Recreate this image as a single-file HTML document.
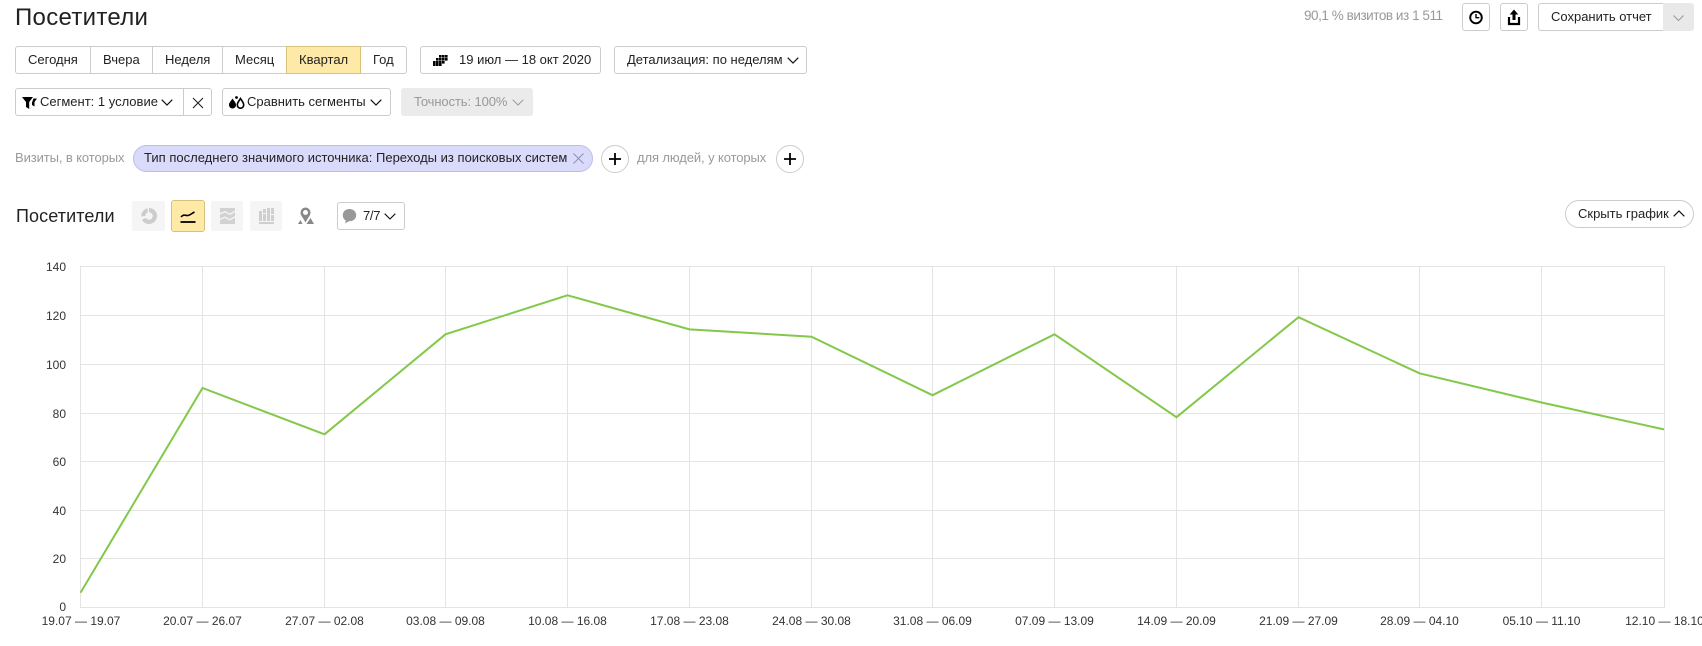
<!DOCTYPE html>
<html lang="ru"><head><meta charset="utf-8"><title>Посетители</title>
<style>
html,body{margin:0;padding:0;background:#fff}
body{position:relative;width:1702px;height:646px;overflow:hidden;font-family:"Liberation Sans",sans-serif;font-size:13px;color:#222}
.a{position:absolute;white-space:nowrap}
.b{position:absolute;box-sizing:border-box;border:1px solid #ccc;border-radius:3px;background:#fff}
.t{position:absolute;white-space:nowrap;line-height:16px;height:16px}
.g{color:#999}
svg{position:absolute;overflow:visible}
</style></head><body>
<div class="t" style="left:15px;top:3px;font-size:24px;line-height:30px;height:30px;color:#222;letter-spacing:.3px">Посетители</div>

<div class="t g" style="left:1304px;top:8px;letter-spacing:-.45px;font-size:13.5px">90,1 % визитов из 1 511</div>
<div class="b" style="left:1462px;top:3px;width:28px;height:28px"></div>
<svg style="left:1462px;top:3px" width="28" height="28" viewBox="0 0 28 28"><circle cx="14" cy="14.500" r="5.800" fill="none" stroke="#000" stroke-width="1.900"/><path d="M14 11v3.700h3.300" fill="none" stroke="#000" stroke-width="1.400"/></svg>
<div class="b" style="left:1500px;top:3px;width:28px;height:28px"></div>
<svg style="left:1500px;top:3px" width="28" height="28" viewBox="0 0 28 28"><path d="M14 6.500l-4.300 5h2.800v5.500h3v-5.500h2.800z" fill="#000"/><path d="M9 14v7h10v-7" fill="none" stroke="#000" stroke-width="2.200"/></svg>
<div class="b" style="left:1538px;top:3px;width:126px;height:28px;border-radius:3px 0 0 3px"></div>
<div class="t" style="left:1551px;top:9px">Сохранить отчет</div>
<div class="a" style="left:1663px;top:3px;width:31px;height:28px;background:#e9e9e9;border-radius:0 3px 3px 0"></div>
<svg style="left:1673px;top:15px" width="11" height="6" viewBox="0 0 11 6"><path d="M.5.500l5 5 5-5" fill="none" stroke="#999"/></svg>

<div class="b" style="left:15px;top:46px;width:392px;height:28px"></div>
<div class="a" style="left:286px;top:46px;width:75px;height:28px;box-sizing:border-box;background:#fee9a6;border:1px solid #d8c27e"></div>
<div class="a" style="left:90px;top:47px;width:1px;height:26px;background:#ccc"></div>
<div class="a" style="left:152px;top:47px;width:1px;height:26px;background:#ccc"></div>
<div class="a" style="left:222px;top:47px;width:1px;height:26px;background:#ccc"></div>
<div class="t" style="left:28px;top:52px">Сегодня</div>
<div class="t" style="left:103px;top:52px">Вчера</div>
<div class="t" style="left:165px;top:52px">Неделя</div>
<div class="t" style="left:235px;top:52px">Месяц</div>
<div class="t" style="left:299px;top:52px">Квартал</div>
<div class="t" style="left:373px;top:52px">Год</div>

<div class="b" style="left:420px;top:46px;width:181px;height:28px"></div>
<svg style="left:433px;top:55px" width="16" height="11" viewBox="0 0 16 11" fill="#000"><path d="M6 0h2.600v2.600H6zM9 0h2.600v2.600H9zM12 0h2.600v2.600h-2.600zM3 3h2.600v2.600H3zM6 3h2.600v2.600H6zM9 3h2.600v2.600H9zM12 3h2.600v2.600h-2.600zM0 6h2.600v2.600H0zM3 6h2.600v2.600H3zM6 6h2.600v2.600H6zM9 6h2.600v2.600H9zM0 8.500h2.600v2.500H0zM3 8.500h2.600v2.500H3zM6 8.500h2.600v2.500H6z"/></svg>
<div class="t" style="left:459px;top:52px">19 июл — 18 окт 2020</div>

<div class="b" style="left:614px;top:46px;width:193px;height:28px"></div>
<div class="t" style="left:627px;top:52px">Детализация: по неделям</div>
<svg style="left:787px;top:57px" width="12" height="7" viewBox="0 0 12 7"><path d="M.7.7L6 6l5.300-5.300" fill="none" stroke="#111" stroke-width="1.200"/></svg>

<div class="b" style="left:15px;top:88px;width:197px;height:28px"></div>
<div class="a" style="left:183px;top:89px;width:1px;height:26px;background:#ccc"></div>
<svg style="left:22px;top:97px" width="15" height="12" viewBox="0 0 15 12" fill="#000"><path d="M0 0h11L7.200 5v7L4 10V5zM11.500 1.500H15L12.500 5v4.500L10 8V5.500z"/></svg>
<div class="t" style="left:40px;top:94px">Сегмент: 1 условие</div>
<svg style="left:161px;top:99px" width="12" height="7" viewBox="0 0 12 7"><path d="M.7.7L6 6l5.300-5.300" fill="none" stroke="#111" stroke-width="1.200"/></svg>
<svg style="left:192px;top:97px" width="12" height="12" viewBox="0 0 12 12"><path d="M1 1l10 10M11 1L1 11" fill="none" stroke="#222" stroke-width="1.100"/></svg>

<div class="b" style="left:222px;top:88px;width:169px;height:28px"></div>
<svg style="left:228px;top:96px" width="17" height="13" viewBox="0 0 17 13"><path d="M4.500 2.500C3 5 1 6.500 1 9a3.500 3.500 0 0 0 7 0c0-2.500-2-4-3.500-6.500z" fill="#000"/><circle cx="8.500" cy="1.500" r="1.400" fill="#000"/><path d="M12.500 2.500C11 5 9.300 6.500 9.300 9a3.200 3.200 0 0 0 6.400 0c0-2.500-1.700-4-3.200-6.500z" fill="#fff" stroke="#000" stroke-width="1.600"/></svg>
<div class="t" style="left:247px;top:94px">Сравнить сегменты</div>
<svg style="left:370px;top:99px" width="12" height="7" viewBox="0 0 12 7"><path d="M.7.7L6 6l5.300-5.300" fill="none" stroke="#111" stroke-width="1.200"/></svg>

<div class="a" style="left:401px;top:88px;width:132px;height:28px;background:#ebebeb;border-radius:3px"></div>
<div class="t" style="left:414px;top:94px;color:#999;letter-spacing:-.1px">Точность: 100%</div>
<svg style="left:512px;top:99px" width="12" height="7" viewBox="0 0 12 7"><path d="M.7.7L6 6l5.300-5.300" fill="none" stroke="#999" stroke-width="1"/></svg>

<div class="t g" style="left:15px;top:150px;letter-spacing:-.1px">Визиты, в которых</div>
<div class="b" style="left:133px;top:145px;width:460px;height:27px;border-radius:14px;background:#dadbfb;border-color:#bcbdea"></div>
<div class="t" style="left:144px;top:150px;letter-spacing:.01px">Тип последнего значимого источника: Переходы из поисковых систем</div>
<svg style="left:573px;top:153px" width="11" height="11" viewBox="0 0 11 11"><path d="M.5.500l10 10M10.500.500l-10 10" fill="none" stroke="#8f90b5"/></svg>
<div class="b" style="left:601px;top:145px;width:28px;height:28px;border-radius:50%"></div>
<svg style="left:609px;top:153px" width="12" height="12" viewBox="0 0 12 12"><path d="M6 0v12M0 6h12" stroke="#000" stroke-width="1.800"/></svg>
<div class="t g" style="left:637px;top:150px;letter-spacing:-.1px">для людей, у которых</div>
<div class="b" style="left:776px;top:145px;width:28px;height:28px;border-radius:50%"></div>
<svg style="left:784px;top:153px" width="12" height="12" viewBox="0 0 12 12"><path d="M6 0v12M0 6h12" stroke="#000" stroke-width="1.800"/></svg>

<div class="t" style="left:16px;top:204px;font-size:18px;line-height:24px;height:24px;color:#222;letter-spacing:.1px">Посетители</div>
<div class="a" style="left:132px;top:201px;width:33px;height:30px;background:#f5f5f5;border-radius:2px"></div>
<svg style="left:141px;top:208px" width="16" height="16" viewBox="0 0 16 16"><path d="M8 0a8 8 0 1 1-7 11.900l3.800-2.200A3.700 3.700 0 1 0 8 4.300z" fill="#ccc"/><path d="M6.500.200A8 8 0 0 0 .300 8.500l4-.5A3.700 3.700 0 0 1 6.800 4.500z" fill="#ccc"/></svg>
<div class="b" style="left:171px;top:200px;width:34px;height:32px;background:#fee9a6;border-color:#d8c27e;border-radius:3px"></div>
<svg style="left:180px;top:210px" width="16" height="13" viewBox="0 0 16 13"><path d="M1 7c3-3.500 4.500-1 7-1.500 2.500-.5 3.500-2 6.500-3.500" fill="none" stroke="#000" stroke-width="1.600"/><path d="M.5 12h15" stroke="#000" stroke-width="1.800"/></svg>
<div class="a" style="left:211px;top:201px;width:32px;height:30px;background:#f5f5f5;border-radius:2px"></div>
<svg style="left:220px;top:208px" width="15" height="16" viewBox="0 0 15 16" fill="#d2d2d2"><path d="M0 0h15v2.500L10 5.500 5 3 0 5zM0 6.500L5 4.500l5 2.500 5-3v4l-5 3-5-2.500-5 2zM0 12l5-2 5 2.500 5-3V16H0z"/></svg>
<div class="a" style="left:250px;top:201px;width:32px;height:30px;background:#f5f5f5;border-radius:2px"></div>
<svg style="left:259px;top:208px" width="15" height="16" viewBox="0 0 15 16" fill="#cfcfcf"><path d="M0 3h3v10H0zM4 6h3v7H4zM4 1h3v4H4zM8 0h3v13H8zM12 0h3v6h-3zM12 7h3v6h-3zM0 14h15v2H0z"/></svg>
<svg style="left:298px;top:207px" width="16" height="18" viewBox="0 0 16 18"><path d="M7.500 0.500a5 5 0 0 0-5 5c0 2.500 1.500 4 3 6.500l2 3.500 2-3.500c1.500-2.500 3-4 3-6.500a5 5 0 0 0-5-5zm0 2.500a2.300 2.300 0 1 1 0 5 2.300 2.300 0 0 1 0-5z" fill="#888"/><path d="M0 17l2.500-4 2 4zM8.500 17l4-6 3.500 6z" fill="#888"/></svg>
<div class="b" style="left:337px;top:202px;width:68px;height:28px"></div>
<svg style="left:342px;top:208px" width="15" height="16" viewBox="0 0 15 16"><path d="M7.500 1C3.500 1 .8 3.700.8 7.200c0 2.500 1.400 4.300 3 5.300L3 15.500l3.800-2.300h.7c3.800 0 6.700-2.500 6.700-6S11.300 1 7.500 1z" fill="#999"/></svg>
<div class="t" style="left:363px;top:208px;letter-spacing:-.3px">7/7</div>
<svg style="left:384px;top:213px" width="12" height="7" viewBox="0 0 12 7"><path d="M.7.7L6 6l5.300-5.300" fill="none" stroke="#111" stroke-width="1.100"/></svg>
<div class="b" style="left:1565px;top:200px;width:129px;height:28px;border-radius:14px"></div>
<div class="t" style="left:1578px;top:206px">Скрыть график</div>
<svg style="left:1673px;top:210px" width="12" height="7" viewBox="0 0 12 7"><path d="M.7 6.300L6 1l5.300 5.300" fill="none" stroke="#111" stroke-width="1.200"/></svg>

<svg style="left:0;top:0" width="1702" height="646" viewBox="0 0 1702 646">
<g stroke="#e4e4e4" stroke-width="1" fill="none" shape-rendering="crispEdges">
<path d="M80.500 266.500H1664.500M80.500 315.500H1664.500M80.500 364.500H1664.500M80.500 413.500H1664.500M80.500 461.500H1664.500M80.500 510.500H1664.500M80.500 558.500H1664.500M80.500 607.500H1664.500"/>
<path d="M80.500 266V608M202.500 266V608M324.500 266V608M445.500 266V608M567.500 266V608M689.500 266V608M811.500 266V608M932.500 266V608M1054.500 266V608M1176.500 266V608M1298.500 266V608M1419.500 266V608M1541.500 266V608M1664.500 266V608"/>
</g>
<polyline fill="none" stroke="#83c84a" stroke-width="2" points="80.500,592.700 202.500,388 324.500,434.300 445.500,334.300 567.500,295.300 689.500,329.400 811.500,336.700 932.500,395.200 1054.500,334.300 1176.500,417.200 1298.500,317.200 1419.500,373.300 1541.500,402.500 1664,429.400"/>
<g font-family="Liberation Sans, sans-serif" font-size="12" fill="#333" text-anchor="end">
<text x="66" y="271">140</text><text x="66" y="320">120</text><text x="66" y="369">100</text><text x="66" y="418">80</text><text x="66" y="466">60</text><text x="66" y="515">40</text><text x="66" y="563">20</text><text x="66" y="611">0</text>
</g>
<g font-family="Liberation Sans, sans-serif" font-size="12" fill="#333" text-anchor="middle">
<text x="81" y="625">19.07 — 19.07</text><text x="202.500" y="625">20.07 — 26.07</text><text x="324.500" y="625">27.07 — 02.08</text><text x="445.500" y="625">03.08 — 09.08</text><text x="567.500" y="625">10.08 — 16.08</text><text x="689.500" y="625">17.08 — 23.08</text><text x="811.500" y="625">24.08 — 30.08</text><text x="932.500" y="625">31.08 — 06.09</text><text x="1054.500" y="625">07.09 — 13.09</text><text x="1176.500" y="625">14.09 — 20.09</text><text x="1298.500" y="625">21.09 — 27.09</text><text x="1419.500" y="625">28.09 — 04.10</text><text x="1541.500" y="625">05.10 — 11.10</text><text x="1664.500" y="625">12.10 — 18.10</text>
</g>
</svg>
</body></html>
